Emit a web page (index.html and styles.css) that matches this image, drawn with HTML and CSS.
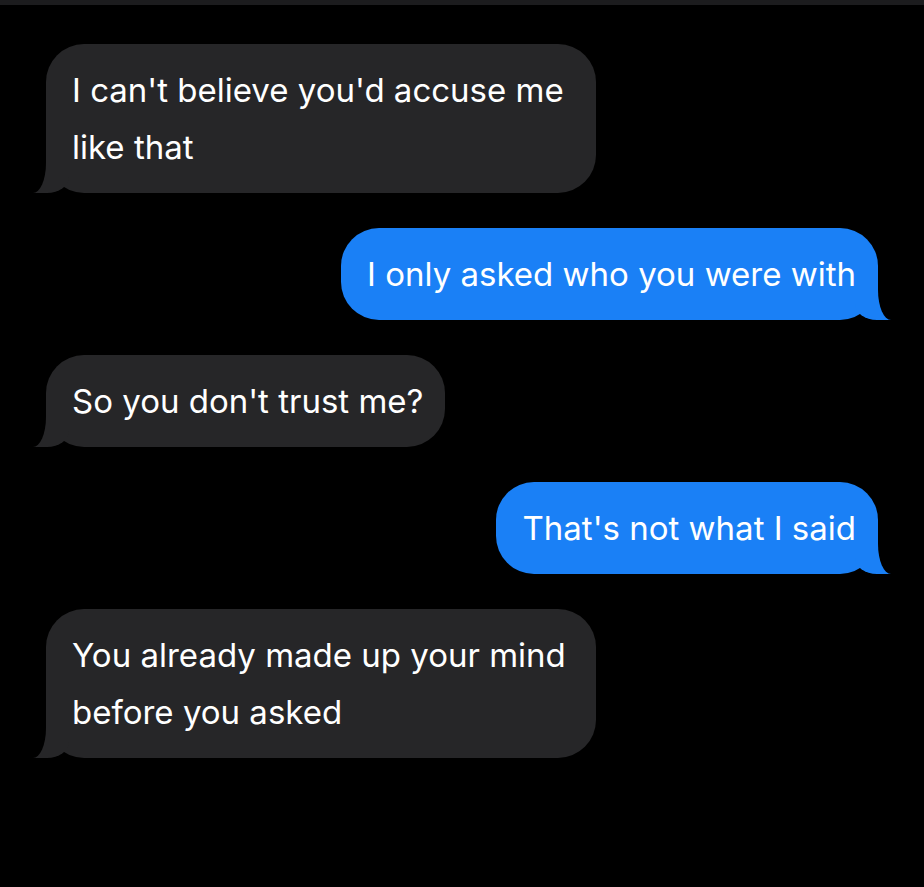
FILE: index.html
```html
<html>

<head>
    <title>Messages</title>
    <link rel="stylesheet" href="styles.css">
</head>

<body>
    <div id="topBar"></div>
    <div id="thread">
        <div class="bubble them">I can't believe you'd accuse me like that</div>
        <div class="bubble me">I only asked who you were with</div>
        <div class="bubble them">So you don't trust me?</div>
        <div class="bubble me">That's not what I said</div>
        <div class="bubble them">You already made up your mind before you asked</div>
    </div>
</body>

</html>
```

FILE: styles.css
```css
body {
    margin: 0;
    background-color: #000;
    font-family: 'Inter', 'Liberation Sans', sans-serif;
    color: #fff;
}

#topBar {
    height: 5px;
    background-color: #1c1c1e;
}

#thread {
    display: flex;
    flex-direction: column;
    gap: 35px;
    padding: 39px 46px 0 46px;
}

.bubble {
    position: relative;
    max-width: 550px;
    box-sizing: border-box;
    padding: 18px 22px 17px 26px;
    border-radius: 38px;
    font-size: 33px;
    line-height: 57px;
}

/* tail: coloured blob, then a black one carved out of it */
.bubble::before,
.bubble::after {
    content: "";
    position: absolute;
    bottom: 0;
}

.them {
    align-self: flex-start;
    background-color: #262628;
}

.them::before {
    left: -13px;
    width: 36px;
    height: 40px;
    background-color: #262628;
    border-bottom-right-radius: 22px 16px;
}

.them::after {
    left: -26px;
    width: 26px;
    height: 42px;
    background-color: #000;
    border-bottom-right-radius: 13px 30px;
}

.me {
    align-self: flex-end;
    background-color: #1a80f6;
}

.me::before {
    right: -13px;
    width: 36px;
    height: 40px;
    background-color: #1a80f6;
    border-bottom-left-radius: 22px 16px;
}

.me::after {
    right: -26px;
    width: 26px;
    height: 42px;
    background-color: #000;
    border-bottom-left-radius: 13px 30px;
}
```
